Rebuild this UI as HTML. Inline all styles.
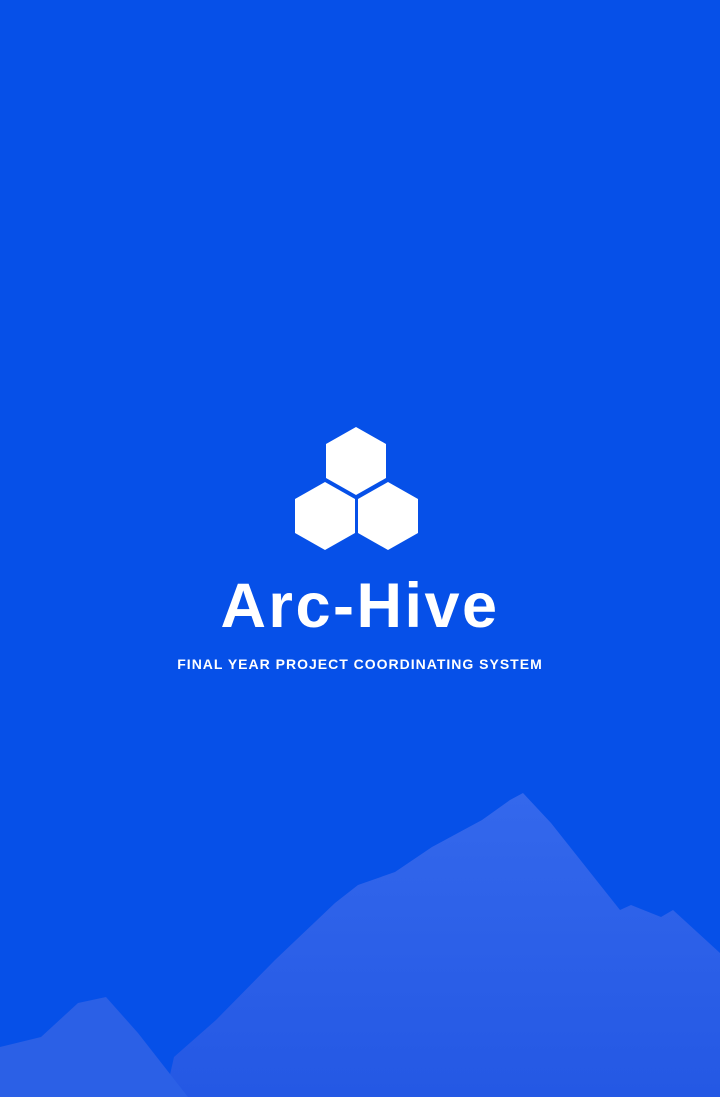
<!DOCTYPE html>
<html><head><meta charset="utf-8"><style>
html,body{margin:0;padding:0}
body{width:720px;height:1097px;background:#0650E8;position:relative;overflow:hidden;font-family:"Liberation Sans",sans-serif}
svg{position:absolute;left:0;top:0}
.t{position:absolute;left:0;width:720px;text-align:center;color:#fff;font-weight:bold}
</style></head><body>
<svg width="720" height="1097">
<defs><linearGradient id="g" x1="0" y1="0" x2="0" y2="1"><stop offset="0" stop-color="#3468ec"/><stop offset="1" stop-color="#2458e4"/></linearGradient></defs>
<polygon fill="url(#g)" points="165,1097 174,1057 216,1020 275,960 335,903 358,885 395,872 432,847 482,820 510,800 523,793 551,823 620,910 631,905 661,917 673,910 720,953 720,1097"/>
<polygon fill="#2b60e6" points="0,1047 41,1037 78,1003 106,997 138,1033 188,1097 0,1097"/>
<polygon fill="#fff" points="356,427 386,444 386,478 356,495 326,478 326,444"/>
<polygon fill="#fff" points="325,482 355,499 355,533 325,550 295,533 295,499"/>
<polygon fill="#fff" points="388,482 418,499 418,533 388,550 358,533 358,499"/>
</svg>
<div class="t" style="top:570px;font-size:63px;letter-spacing:2.5px">Arc-Hive</div>
<div class="t" style="top:656px;font-size:14px;letter-spacing:1px">FINAL YEAR PROJECT COORDINATING SYSTEM</div>
</body></html>
